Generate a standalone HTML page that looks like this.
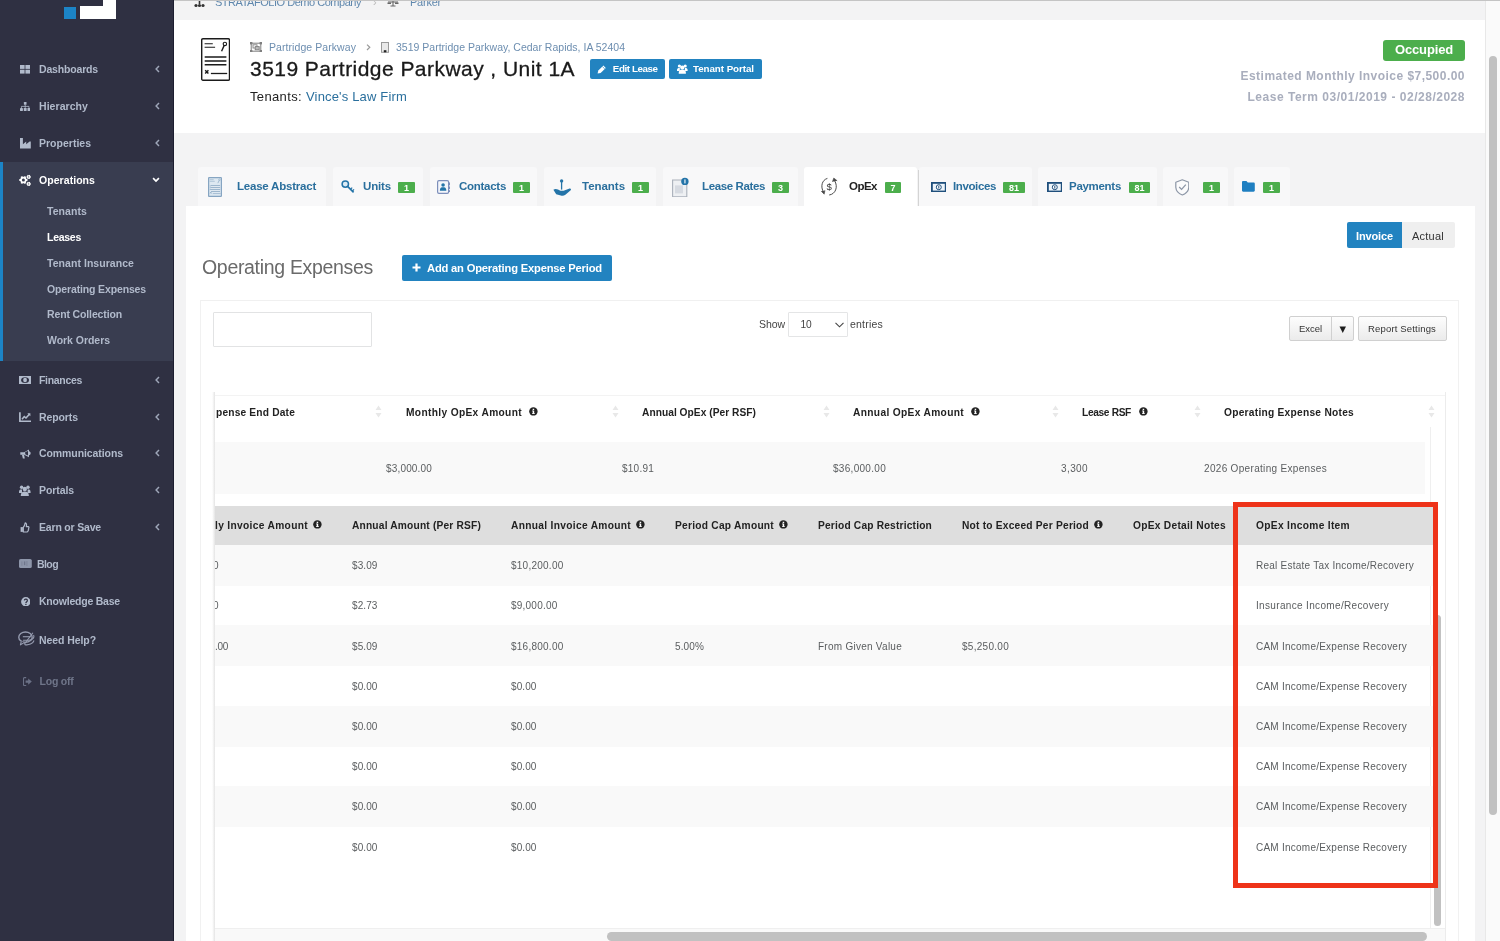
<!DOCTYPE html>
<html lang="en"><head><meta charset="utf-8"><title>3519 Partridge Parkway, Unit 1A - Operating Expenses</title>
<style>
html,body{margin:0;padding:0;}
body{width:1500px;height:941px;overflow:hidden;position:relative;background:#f3f3f4;font-family:'Liberation Sans',sans-serif;}
#page{position:absolute;left:0;top:0;width:1500px;height:941px;overflow:hidden;will-change:transform;}
#page nav,#page header,#page section,#page main,#page .bg{position:static;display:block;margin:0;padding:0;}
#page div,#page svg{position:absolute;box-sizing:border-box;}
#page div.bg{position:static;}
#page span{position:absolute;white-space:pre;line-height:20px;font-family:'Liberation Sans',sans-serif;}
</style></head><body><div id="page">
<div class="bg">
<div style="left:174px;top:0px;width:1326px;height:941px;background:#f3f3f4;"></div>
<div style="left:174px;top:20px;width:1311px;height:113px;background:#fff;"></div>
<div style="left:1485px;top:0px;width:15px;height:941px;background:#fafafa;border-left:1px solid #e8e8e8;"></div>
<div style="left:1489px;top:56px;width:8px;height:759px;background:#c1c1c1;border-radius:4px;"></div>
<div style="left:174px;top:0px;width:1326px;height:1px;background:#c4c4c4;z-index:2;"></div>
</div>
<nav class="sidebar" aria-label="Main navigation">
<div style="left:0px;top:0px;width:174px;height:941px;background:#2f3042;"></div>
<div style="left:0px;top:162px;width:174px;height:199px;background:#393d50;border-left:3.6px solid #1c84c6;"></div>
<div style="left:172.6px;top:0px;width:1.4px;height:941px;background:#1c1d2f;"></div>
<div style="left:64px;top:6.6px;width:11.6px;height:12.4px;background:#1c84c6;"></div>
<div style="left:80px;top:5.6px;width:35.6px;height:13.4px;background:#fff;"></div>
<div style="left:103px;top:0px;width:12.6px;height:8px;background:#fff;"></div>
<svg style="left:153.6px;top:64px" width="8" height="10" viewBox="0 0 8 10"><path d="M5 1.9 L2.1 5 L5 8.1" fill="none" stroke="#9ea6b8" stroke-width="1.45"/></svg>
<svg style="left:153.6px;top:101px" width="8" height="10" viewBox="0 0 8 10"><path d="M5 1.9 L2.1 5 L5 8.1" fill="none" stroke="#9ea6b8" stroke-width="1.45"/></svg>
<svg style="left:153.6px;top:138px" width="8" height="10" viewBox="0 0 8 10"><path d="M5 1.9 L2.1 5 L5 8.1" fill="none" stroke="#9ea6b8" stroke-width="1.45"/></svg>
<svg style="left:150.6px;top:176px" width="10" height="8" viewBox="0 0 10 8"><path d="M2.1 2.2 L5 5 L7.9 2.2" fill="none" stroke="#fff" stroke-width="1.7"/></svg>
<svg style="left:153.6px;top:375px" width="8" height="10" viewBox="0 0 8 10"><path d="M5 1.9 L2.1 5 L5 8.1" fill="none" stroke="#9ea6b8" stroke-width="1.45"/></svg>
<svg style="left:153.6px;top:412px" width="8" height="10" viewBox="0 0 8 10"><path d="M5 1.9 L2.1 5 L5 8.1" fill="none" stroke="#9ea6b8" stroke-width="1.45"/></svg>
<svg style="left:153.6px;top:448px" width="8" height="10" viewBox="0 0 8 10"><path d="M5 1.9 L2.1 5 L5 8.1" fill="none" stroke="#9ea6b8" stroke-width="1.45"/></svg>
<svg style="left:153.6px;top:485px" width="8" height="10" viewBox="0 0 8 10"><path d="M5 1.9 L2.1 5 L5 8.1" fill="none" stroke="#9ea6b8" stroke-width="1.45"/></svg>
<svg style="left:153.6px;top:522px" width="8" height="10" viewBox="0 0 8 10"><path d="M5 1.9 L2.1 5 L5 8.1" fill="none" stroke="#9ea6b8" stroke-width="1.45"/></svg>
<svg style="left:20.2px;top:65.2px" width="10" height="8.6" viewBox="0 0 10 8.6"><rect x="0" y="0" width="4.6" height="3.9" fill="#b1bacb"/><rect x="5.4" y="0" width="4.6" height="3.9" fill="#b1bacb"/><rect x="0" y="4.7" width="4.6" height="3.9" fill="#b1bacb"/><rect x="5.4" y="4.7" width="4.6" height="3.9" fill="#b1bacb"/></svg>
<svg style="left:20px;top:102px" width="10.4" height="9" viewBox="0 0 10.4 9"><rect x="3.9" y="0" width="2.6" height="2.8" rx=".4" fill="#b1bacb"/><rect x="0" y="6" width="2.9" height="3" rx=".4" fill="#b1bacb"/><rect x="3.75" y="6" width="2.9" height="3" rx=".4" fill="#b1bacb"/><rect x="7.5" y="6" width="2.9" height="3" rx=".4" fill="#b1bacb"/><path d="M5.2 2.8V6M1.45 6V4.4H8.95V6" fill="none" stroke="#b1bacb" stroke-width=".8"/></svg>
<svg style="left:19.8px;top:138.2px" width="10.8" height="10.6" viewBox="0 0 10.8 10.6"><path d="M0 0H2.9V6.2L6.2 3.4V6.2L9.6 3.4H10.8V10.6H0Z" fill="#b1bacb"/></svg>
<svg style="left:18px;top:174px" width="14" height="12" viewBox="0 0 14 12"><polygon points="9.48,5.02 9.48,6.98 8.54,6.93 7.78,8.26 8.29,9.05 6.59,10.03 6.16,9.19 4.64,9.19 4.21,10.03 2.51,9.05 3.02,8.26 2.26,6.93 1.32,6.98 1.32,5.02 2.26,5.07 3.02,3.74 2.51,2.95 4.21,1.97 4.64,2.81 6.16,2.81 6.59,1.97 8.29,2.95 7.78,3.74 8.54,5.07" fill="#fff"/><circle cx="5.4" cy="6" r="1.5" fill="#393d50"/><polygon points="12.94,2.36 12.94,3.44 12.42,3.41 12.00,4.13 12.28,4.57 11.35,5.11 11.12,4.64 10.28,4.64 10.05,5.11 9.12,4.57 9.40,4.13 8.98,3.41 8.46,3.44 8.46,2.36 8.98,2.39 9.40,1.67 9.12,1.23 10.05,0.69 10.28,1.16 11.12,1.16 11.35,0.69 12.28,1.23 12.00,1.67 12.42,2.39" fill="#fff"/><circle cx="10.7" cy="2.9" r="0.55" fill="#393d50"/><polygon points="12.94,9.36 12.94,10.44 12.42,10.41 12.00,11.13 12.28,11.57 11.35,12.11 11.12,11.64 10.28,11.64 10.05,12.11 9.12,11.57 9.40,11.13 8.98,10.41 8.46,10.44 8.46,9.36 8.98,9.39 9.40,8.67 9.12,8.23 10.05,7.69 10.28,8.16 11.12,8.16 11.35,7.69 12.28,8.23 12.00,8.67 12.42,9.39" fill="#fff"/><circle cx="10.7" cy="9.9" r="0.55" fill="#393d50"/></svg>
<svg style="left:19.1px;top:376px" width="12.1" height="8.1" viewBox="0 0 12.1 8.1"><rect x="0" y="0" width="12.1" height="8.1" fill="#b1bacb"/><ellipse cx="6.05" cy="4.05" rx="4.0" ry="2.9" fill="#2f3042"/><ellipse cx="6.05" cy="4.05" rx="1.9" ry="2.3" fill="#b1bacb"/></svg>
<svg style="left:18.9px;top:412px" width="12.2" height="10.2" viewBox="0 0 12.2 10.2"><path d="M0.9 0.3V9.3H12.2" fill="none" stroke="#b1bacb" stroke-width="1.7"/><path d="M3 7.2L5.3 4.6L7 6L10.4 2.2" fill="none" stroke="#b1bacb" stroke-width="1.6"/><path d="M8.3 1.2H11.4V4.3Z" fill="#b1bacb"/></svg>
<svg style="left:19.6px;top:449px" width="11.4" height="10" viewBox="0 0 11.4 10"><path d="M0.3 3.2H4.2L9 0.4V8.2L4.2 5.8H0.3Z" fill="#b1bacb"/><path d="M1.9 5.8H4.1L4.8 9.6H2.9Z" fill="#b1bacb"/><path d="M9 2.2C11.2 2.4 11.2 6 9 6.2Z" fill="#b1bacb"/><path d="M5.2 3.1L8 1.9V6.4L5.2 5.3Z" fill="#2f3042"/></svg>
<svg style="left:19.4px;top:485.2px" width="11.6" height="11.2" viewBox="0 0 11.6 11.2"><circle cx="2.6" cy="2.3" r="1.7" fill="#b1bacb"/><circle cx="9" cy="2.3" r="1.7" fill="#b1bacb"/><circle cx="5.8" cy="4" r="2.2" fill="#b1bacb"/><path d="M0 7.2C0 4.6 1.5 4.4 3 4.6V8H0Z" fill="#b1bacb"/><path d="M11.6 7.2C11.6 4.6 10.1 4.4 8.6 4.6V8H11.6Z" fill="#b1bacb"/><path d="M1.8 11.2C1.6 7.6 3 6.4 5.8 6.4C8.6 6.4 10 7.6 9.8 11.2Z" fill="#b1bacb"/></svg>
<svg style="left:20.4px;top:522.2px" width="9.4" height="10.6" viewBox="0 0 9.4 10.6"><path d="M0.6 5.1H2.9V9.9H0.6Z" fill="#b1bacb"/><path d="M3.3 5.3C4.6 3.8 5 2.4 5.2 0.8C6.6 1 6.8 2.8 6.3 4.6H8.4C9.2 4.8 9 6 8.6 6.3C9 6.9 8.7 7.6 8.3 7.8C8.5 8.5 8.2 9 7.8 9.2C7.8 9.8 7.4 10 6.8 10H3.3Z" fill="none" stroke="#b1bacb" stroke-width="1.2" stroke-linejoin="round"/></svg>
<svg style="left:18.9px;top:559.4px" width="12.8" height="9.2" viewBox="0 0 12.8 9.2"><rect x="0" y="0" width="12.8" height="9" rx="1.6" fill="#8e96aa"/><rect x="4.9" y="2.4" width="1.4" height="3.8" fill="#6f768b"/><rect x="7.4" y="2" width="1" height="5" fill="#7c8398"/><rect x="2.4" y="2.4" width="1" height="4.4" fill="#7c8398"/></svg>
<svg style="left:20.5px;top:596.8px" width="9.6" height="9.6" viewBox="0 0 9.6 9.6"><circle cx="4.8" cy="4.8" r="4.7" fill="#b1bacb"/><path d="M3.3 3.3C3.6 1.6 6.5 1.8 6.4 3.6C6.3 4.8 4.9 4.7 4.9 6.1" fill="none" stroke="#2f3042" stroke-width="1.2"/><rect x="4.25" y="6.8" width="1.3" height="1.2" fill="#2f3042"/></svg>
<svg style="left:18.4px;top:631px" width="17.6" height="17.6" viewBox="0 0 16 16"><ellipse cx="6.8" cy="5.6" rx="6.1" ry="4.7" fill="none" stroke="#969cb0" stroke-width="1.25"/><path d="M3 9.4L2.2 12.6L6 10.2" fill="#2f3042" stroke="#969cb0" stroke-width="1" stroke-linejoin="round"/><path d="M4.6 8.4H10C13.6 8 15.2 6 14.2 3.6" fill="none" stroke="#969cb0" stroke-width="1"/><path d="M13.6 1.6L5.6 12.2" fill="none" stroke="#969cb0" stroke-width="1"/><path d="M4.4 5.2H11.6" fill="none" stroke="#969cb0" stroke-width="1"/><path d="M6.2 12.4C9.6 13.2 13.6 11.6 14.6 8.6" fill="none" stroke="#969cb0" stroke-width="1"/></svg>
<svg style="left:23.2px;top:677px" width="9" height="9.2" viewBox="0 0 9 9.2"><path d="M3.2 0.6H1.4C0.8 0.6 0.5 1 0.5 1.6V7.6C0.5 8.2 0.8 8.6 1.4 8.6H3.2" fill="none" stroke="#6b7186" stroke-width="1.1"/><path d="M2.6 3.4H5.2V1.4L8.8 4.6L5.2 7.8V5.8H2.6Z" fill="#6b7186"/></svg>
<span style="left:39px;top:59.00px;font-size:10.5px;font-weight:700;color:#b1bacb;letter-spacing:-0.169px;">Dashboards</span>
<span style="left:39px;top:96.00px;font-size:10.5px;font-weight:700;color:#b1bacb;letter-spacing:0.061px;">Hierarchy</span>
<span style="left:39px;top:133.00px;font-size:10.5px;font-weight:700;color:#b1bacb;letter-spacing:0.006px;">Properties</span>
<span style="left:39px;top:170.00px;font-size:10.5px;font-weight:700;color:#fff;letter-spacing:0.056px;">Operations</span>
<span style="left:39px;top:370.00px;font-size:10.5px;font-weight:700;color:#b1bacb;letter-spacing:-0.316px;">Finances</span>
<span style="left:39px;top:407.00px;font-size:10.5px;font-weight:700;color:#b1bacb;letter-spacing:-0.098px;">Reports</span>
<span style="left:39px;top:443.00px;font-size:10.5px;font-weight:700;color:#b1bacb;letter-spacing:-0.085px;">Communications</span>
<span style="left:39px;top:480.00px;font-size:10.5px;font-weight:700;color:#b1bacb;letter-spacing:-0.087px;">Portals</span>
<span style="left:39px;top:517.00px;font-size:10.5px;font-weight:700;color:#b1bacb;letter-spacing:-0.184px;">Earn or Save</span>
<span style="left:37px;top:554.00px;font-size:10.5px;font-weight:700;color:#b1bacb;letter-spacing:-0.582px;">Blog</span>
<span style="left:39px;top:591.00px;font-size:10.5px;font-weight:700;color:#b1bacb;letter-spacing:-0.217px;">Knowledge Base</span>
<span style="left:39px;top:630.00px;font-size:10.5px;font-weight:700;color:#b1bacb;letter-spacing:-0.077px;">Need Help?</span>
<span style="left:39.5px;top:671.00px;font-size:10.5px;font-weight:700;color:#6f7589;letter-spacing:-0.225px;">Log off</span>
<span style="left:47px;top:201.00px;font-size:10.5px;font-weight:700;color:#b1bacb;letter-spacing:0.074px;">Tenants</span>
<span style="left:47px;top:227.00px;font-size:10.5px;font-weight:700;color:#fff;letter-spacing:-0.271px;">Leases</span>
<span style="left:47px;top:253.00px;font-size:10.5px;font-weight:700;color:#b1bacb;letter-spacing:0.052px;">Tenant Insurance</span>
<span style="left:47px;top:279.00px;font-size:10.5px;font-weight:700;color:#b1bacb;letter-spacing:-0.141px;">Operating Expenses</span>
<span style="left:47px;top:304.00px;font-size:10.5px;font-weight:700;color:#b1bacb;letter-spacing:-0.134px;">Rent Collection</span>
<span style="left:47px;top:330.00px;font-size:10.5px;font-weight:700;color:#b1bacb;letter-spacing:-0.038px;">Work Orders</span>
</nav>
<header class="lease-header">
<div style="left:590px;top:59px;width:75px;height:20px;background:#2283c0;border-radius:2px;"></div>
<div style="left:669px;top:59px;width:93px;height:20px;background:#2283c0;border-radius:2px;"></div>
<div style="left:1383px;top:39.5px;width:82px;height:21.7px;background:#4cae4c;border-radius:3px;"></div>
<svg style="left:200.8px;top:37.8px" width="29.2" height="42.9" viewBox="0 0 29.2 42.9"><rect x="0.7" y="0.7" width="27.8" height="41.5" rx="1.20" fill="none" stroke="#1b1b1b" stroke-width="1.4"/><path d="M3.60 5.70H11.80M3.60 9.30H14.10" stroke="#1b1b1b" stroke-width="1.10"/><path d="M3.70 19.10H25.40M3.70 23.00H25.40M3.70 26.80H25.40" stroke="#1b1b1b" stroke-width="1.50"/><path d="M9.90 35.50H26.20" stroke="#1b1b1b" stroke-width="1.30"/><path d="M4.20 32.20L7.40 35.60M7.40 32.20L4.20 35.60" stroke="#1b1b1b" stroke-width="1.40"/><circle cx="23.90" cy="5.90" r="1.70" fill="none" stroke="#1b1b1b" stroke-width="1.10"/><path d="M23.20 7.40L20.60 13.20" stroke="#1b1b1b" stroke-width="1.40"/></svg>
<svg style="left:249.8px;top:42px" width="12" height="10.4" viewBox="0 0 12 10.4"><rect x="1.2" y="1.2" width="9.6" height="8" fill="none" stroke="#7f7f7f" stroke-width="1"/><rect x="0" y="0" width="2.4" height="2.4" fill="#7f7f7f"/><rect x="9.6" y="0" width="2.4" height="2.4" fill="#7f7f7f"/><rect x="0" y="8" width="2.4" height="2.4" fill="#7f7f7f"/><rect x="9.6" y="8" width="2.4" height="2.4" fill="#7f7f7f"/><rect x="3" y="2.8" width="4" height="3.2" fill="none" stroke="#7f7f7f" stroke-width=".9"/><rect x="5.2" y="4.6" width="4" height="3.2" fill="#bdbdbd" stroke="#7f7f7f" stroke-width=".9"/></svg>
<svg style="left:365.8px;top:44.4px" width="5" height="6.6" viewBox="0 0 5 6.6"><path d="M1 0.6L3.8 3.3L1 6" fill="none" stroke="#9a9a9a" stroke-width="1.2"/></svg>
<svg style="left:381px;top:41.8px" width="8" height="10.8" viewBox="0 0 8 10.8"><rect x=".5" y=".5" width="7" height="9.8" fill="#e9e9e9" stroke="#9a9a9a" stroke-width="1"/><rect x="2.8" y="8.2" width="2.6" height="2.1" fill="#222"/></svg>
<svg style="left:597.4px;top:65.2px" width="9.4" height="8.6" viewBox="0 0 9.4 8.6"><path d="M1.3 5.6L6.4 0.6L8.8 2.9L3.6 8L0.6 8.4Z" fill="#fff"/><path d="M5.4 1.6L7.8 3.9" stroke="#2283c0" stroke-width=".7"/></svg>
<svg style="left:677px;top:64px" width="10.6" height="9.8" viewBox="0 0 10.6 9.8"><circle cx="2.4" cy="2" r="1.6" fill="#fff"/><circle cx="8.2" cy="2" r="1.6" fill="#fff"/><circle cx="5.3" cy="3.5" r="2.1" fill="#fff"/><path d="M0 6.2C0 4 1.4 3.9 2.8 4V7H0Z" fill="#fff"/><path d="M10.6 6.2C10.6 4 9.2 3.9 7.8 4V7H10.6Z" fill="#fff"/><path d="M1.7 9.8C1.5 6.6 2.8 5.6 5.3 5.6C7.8 5.6 9.1 6.6 8.9 9.8Z" fill="#fff"/></svg>
<svg style="left:194px;top:1px" width="11" height="7" viewBox="0 0 11 7"><circle cx="2" cy="4.5" r="1.6" fill="#333"/><circle cx="5.5" cy="4.5" r="1.6" fill="#333"/><circle cx="9" cy="4.5" r="1.6" fill="#333"/><rect x="4.7" y="0" width="1.6" height="3" fill="#333"/></svg>
<svg style="left:387px;top:1px" width="12" height="6" viewBox="0 0 12 6"><path d="M1 1H11M6 0V5M3.5 5H8.5" stroke="#666" stroke-width="1.1" fill="none"/><path d="M0.5 2.2H4M8 2.2H11.5" stroke="#666" stroke-width="1.4"/></svg>
<span style="left:215px;top:-8.00px;font-size:11px;font-weight:400;color:#5f87ad;letter-spacing:-0.471px;">STRATAFOLIO Demo Company</span>
<span style="left:410px;top:-8.00px;font-size:11px;font-weight:400;color:#5f87ad;letter-spacing:-0.234px;">Parker</span>
<span style="left:373px;top:-8.00px;font-size:11px;font-weight:400;color:#bbb;">›</span>
<span style="left:269px;top:37.00px;font-size:10.5px;font-weight:400;color:#6d8eb0;letter-spacing:0.071px;">Partridge Parkway</span>
<span style="left:396px;top:37.00px;font-size:10.5px;font-weight:400;color:#6d8eb0;letter-spacing:0.008px;">3519 Partridge Parkway, Cedar Rapids, IA 52404</span>
<span style="left:250px;top:59.00px;font-size:21px;font-weight:400;color:#1a1a1a;letter-spacing:0.453px;-webkit-text-stroke:0.3px #1a1a1a;">3519 Partridge Parkway , Unit 1A</span>
<span style="left:250px;top:87.00px;font-size:13px;font-weight:400;color:#222;letter-spacing:0.355px;">Tenants:</span>
<span style="left:306px;top:87.00px;font-size:13px;font-weight:400;color:#2a6f9d;letter-spacing:0.167px;">Vince&#x27;s Law Firm</span>
<span style="left:612.8px;top:59.00px;font-size:9.8px;font-weight:700;color:#fff;letter-spacing:-0.422px;">Edit Lease</span>
<span style="left:693px;top:59.00px;font-size:9.8px;font-weight:700;color:#fff;letter-spacing:-0.067px;">Tenant Portal</span>
<span style="left:1395px;top:40.00px;font-size:13px;font-weight:700;color:#fff;letter-spacing:-0.156px;">Occupied</span>
<span style="left:1240.5px;top:65.90px;font-size:12px;font-weight:700;color:#a9aebd;letter-spacing:0.469px;">Estimated Monthly Invoice $7,500.00</span>
<span style="left:1247.5px;top:87.10px;font-size:12px;font-weight:700;color:#a9aebd;letter-spacing:0.517px;">Lease Term 03/01/2019 - 02/28/2028</span>
</header>
<section class="lease-tabs">
<div style="left:198px;top:167px;width:128px;height:40px;background:#f8f8f9;border-radius:3px 3px 0 0;"></div>
<div style="left:333px;top:167px;width:90px;height:40px;background:#f8f8f9;border-radius:3px 3px 0 0;"></div>
<div style="left:398px;top:181.5px;width:17px;height:11.8px;background:#4cae4c;border-radius:1px;"></div>
<div style="left:430px;top:167px;width:107px;height:40px;background:#f8f8f9;border-radius:3px 3px 0 0;"></div>
<div style="left:513px;top:181.5px;width:17px;height:11.8px;background:#4cae4c;border-radius:1px;"></div>
<div style="left:544px;top:167px;width:112px;height:40px;background:#f8f8f9;border-radius:3px 3px 0 0;"></div>
<div style="left:632px;top:181.5px;width:17px;height:11.8px;background:#4cae4c;border-radius:1px;"></div>
<div style="left:663px;top:167px;width:135px;height:40px;background:#f8f8f9;border-radius:3px 3px 0 0;"></div>
<div style="left:772px;top:181.5px;width:17px;height:11.8px;background:#4cae4c;border-radius:1px;"></div>
<div style="left:804px;top:167px;width:113px;height:40px;background:#fff;border-radius:3px 3px 0 0;"></div>
<div style="left:885px;top:181.5px;width:16px;height:11.8px;background:#4cae4c;border-radius:1px;"></div>
<div style="left:919px;top:167px;width:113px;height:40px;background:#f8f8f9;border-radius:3px 3px 0 0;"></div>
<div style="left:1003px;top:181.5px;width:22px;height:11.8px;background:#4cae4c;border-radius:1px;"></div>
<div style="left:1038px;top:167px;width:119px;height:40px;background:#f8f8f9;border-radius:3px 3px 0 0;"></div>
<div style="left:1129px;top:181.5px;width:21px;height:11.8px;background:#4cae4c;border-radius:1px;"></div>
<div style="left:1163px;top:167px;width:65px;height:40px;background:#f8f8f9;border-radius:3px 3px 0 0;"></div>
<div style="left:1203px;top:181.5px;width:17px;height:11.8px;background:#4cae4c;border-radius:1px;"></div>
<div style="left:1234px;top:167px;width:56px;height:40px;background:#f8f8f9;border-radius:3px 3px 0 0;"></div>
<div style="left:1263px;top:181.5px;width:17px;height:11.8px;background:#4cae4c;border-radius:1px;"></div>
<div style="left:917.6px;top:170px;width:1.2px;height:36px;background:#d4d4d4;"></div>
<svg style="left:208px;top:177.2px" width="14" height="20" viewBox="0 0 14 20"><rect x="0.6" y="0.6" width="12.8" height="18.8" rx="0.58" fill="#dde8f1" stroke="#86a5c2" stroke-width="1.2"/><path d="M1.73 2.66H5.66M1.73 4.34H6.76" stroke="#86a5c2" stroke-width="0.51"/><path d="M1.77 8.90H12.18M1.77 10.72H12.18M1.77 12.49H12.18" stroke="#86a5c2" stroke-width="0.70"/><path d="M4.75 16.55H12.56" stroke="#86a5c2" stroke-width="0.61"/><path d="M2.01 15.01L3.55 16.60M3.55 15.01L2.01 16.60" stroke="#86a5c2" stroke-width="0.65"/><circle cx="11.46" cy="2.75" r="0.82" fill="none" stroke="#86a5c2" stroke-width="0.53"/><path d="M11.12 3.45L9.88 6.15" stroke="#86a5c2" stroke-width="0.67"/></svg>
<div style="left:210.5px;top:185.2px;width:9px;height:6.4px;background:repeating-linear-gradient(#9db6cd 0,#9db6cd 1.1px,#dfe8f0 1.1px,#dfe8f0 2.1px);"></div>
<svg style="left:341px;top:180.4px" width="14" height="13.4" viewBox="0 0 14 13.4"><circle cx="4.3" cy="4.1" r="3.2" fill="#dcebf5" stroke="#2474a8" stroke-width="1.5"/><path d="M6.6 6.4L12.6 12.4" stroke="#2474a8" stroke-width="1.7"/><path d="M9.6 9.2L11.2 7.6M11.4 11L13 9.4" stroke="#2474a8" stroke-width="1.2"/></svg>
<svg style="left:437px;top:180px" width="13.4" height="14" viewBox="0 0 13.4 14"><rect x=".6" y=".6" width="11" height="12.8" rx="1.4" fill="#f4f6fb" stroke="#7d8fbb" stroke-width="1.2"/><path d="M12.4 2.6V5.2M12.4 6.4V9M12.4 10.2V12" stroke="#7d8fbb" stroke-width="1.2"/><circle cx="6.1" cy="5" r="1.8" fill="#2474a8"/><path d="M2.9 10.8C2.9 7.6 4.4 7.2 6.1 7.2C7.8 7.2 9.3 7.6 9.3 10.8Z" fill="#2474a8"/></svg>
<svg style="left:552.5px;top:179.4px" width="18.4" height="17" viewBox="0 0 18.4 17"><circle cx="8.6" cy="1.9" r="1.7" fill="#2474a8"/><path d="M8.6 3V10.6" stroke="#2474a8" stroke-width="1.3"/><path d="M0.4 10.8C1.8 9.6 3.6 9.8 5 10.6L7.4 11.8H10.6L16.6 9.6C18.2 9.4 18.4 10.8 17.4 11.6L12.4 15.8C11 16.8 9.6 17 7.8 16.6L3.2 15.2Z" fill="#2474a8"/></svg>
<svg style="left:671.5px;top:177px" width="18" height="20.4" viewBox="0 0 18 20.4"><path d="M0.6 3H14.8V19.8H0.6Z" fill="#eef0f3" stroke="#a9b0ba" stroke-width="1.1"/><rect x="3" y="8.4" width="8" height="8" fill="#d6dae1"/><circle cx="12.9" cy="4.4" r="3.7" fill="#2474a8"/><rect x="12.4" y="2.4" width="1.1" height="4" fill="#fff"/></svg>
<svg style="left:818.6px;top:177.4px" width="20.4" height="19.4" viewBox="0 0 20.4 19.4"><path d="M8.4 1.4C3 3 1.2 9.4 4.6 15.4" fill="none" stroke="#4a4a4a" stroke-width="1"/><path d="M2.2 14.2L5.2 17.2L6 13.4" fill="#4a4a4a" stroke="#4a4a4a" stroke-width=".6"/><path d="M10.2 18C16.4 17.2 19.4 10 15.6 3.6" fill="none" stroke="#4a4a4a" stroke-width="1"/><path d="M13.4 4.8L14.8 1L18.2 3.8" fill="#4a4a4a" stroke="#4a4a4a" stroke-width=".6"/></svg>
<svg style="left:930.8px;top:181.6px" width="15.6" height="10.4" viewBox="0 0 15.6 10.4"><rect x=".9" y=".9" width="13.8" height="8.6" fill="#eef5fb" stroke="#1f4f7c" stroke-width="1.8"/><circle cx="7.8" cy="5.2" r="2.5" fill="#fff" stroke="#1f4f7c" stroke-width="1"/><rect x="7.3" y="3.8" width="1" height="2.8" fill="#1f4f7c"/></svg>
<svg style="left:1046.6px;top:181.6px" width="15.6" height="10.4" viewBox="0 0 15.6 10.4"><rect x=".9" y=".9" width="13.8" height="8.6" fill="#eef5fb" stroke="#1f4f7c" stroke-width="1.8"/><circle cx="7.8" cy="5.2" r="2.5" fill="#fff" stroke="#1f4f7c" stroke-width="1"/><rect x="7.3" y="3.8" width="1" height="2.8" fill="#1f4f7c"/></svg>
<svg style="left:1174.6px;top:178.8px" width="14.6" height="16.8" viewBox="0 0 14.6 16.8"><path d="M7.3 0.8L13.8 3.2V8.2C13.6 11.8 10.8 14.6 7.3 16C3.8 14.6 1 11.8 0.8 8.2V3.2Z" fill="#fbfbfc" stroke="#8c96a6" stroke-width="1.2" stroke-linejoin="round"/><path d="M4.2 8L6.6 10.4L10.8 5.6" fill="none" stroke="#8c96a6" stroke-width="1.3"/></svg>
<svg style="left:1242px;top:181px" width="12.8" height="10.8" viewBox="0 0 12.8 10.8"><path d="M0 1.2C0 .5 .5 0 1.2 0H4.4L5.8 1.6H11.6C12.3 1.6 12.8 2.1 12.8 2.8V9.6C12.8 10.3 12.3 10.8 11.6 10.8H1.2C.5 10.8 0 10.3 0 9.6Z" fill="#1f7fc1"/></svg>
<span style="left:237px;top:176.00px;font-size:11.5px;font-weight:700;color:#2a6f9d;letter-spacing:-0.217px;">Lease Abstract</span>
<span style="left:363px;top:176.00px;font-size:11.5px;font-weight:700;color:#2a6f9d;letter-spacing:-0.150px;">Units</span>
<span style="left:404.0px;top:177.50px;font-size:9px;font-weight:700;color:#fff;">1</span>
<span style="left:459px;top:176.00px;font-size:11.5px;font-weight:700;color:#2a6f9d;letter-spacing:-0.275px;">Contacts</span>
<span style="left:519.0px;top:177.50px;font-size:9px;font-weight:700;color:#fff;">1</span>
<span style="left:582px;top:176.00px;font-size:11.5px;font-weight:700;color:#2a6f9d;letter-spacing:-0.036px;">Tenants</span>
<span style="left:638.0px;top:177.50px;font-size:9px;font-weight:700;color:#fff;">1</span>
<span style="left:702px;top:176.00px;font-size:11.5px;font-weight:700;color:#2a6f9d;letter-spacing:-0.375px;">Lease Rates</span>
<span style="left:778.0px;top:177.50px;font-size:9px;font-weight:700;color:#fff;">3</span>
<span style="left:849px;top:176.00px;font-size:11.5px;font-weight:700;color:#222;letter-spacing:-0.512px;">OpEx</span>
<span style="left:890.5px;top:177.50px;font-size:9px;font-weight:700;color:#fff;">7</span>
<span style="left:953px;top:176.00px;font-size:11.5px;font-weight:700;color:#2a6f9d;letter-spacing:-0.379px;">Invoices</span>
<span style="left:1009.0px;top:177.50px;font-size:9px;font-weight:700;color:#fff;">81</span>
<span style="left:1069px;top:176.00px;font-size:11.5px;font-weight:700;color:#2a6f9d;letter-spacing:-0.293px;">Payments</span>
<span style="left:1134.5px;top:177.50px;font-size:9px;font-weight:700;color:#fff;">81</span>
<span style="left:1209.0px;top:177.50px;font-size:9px;font-weight:700;color:#fff;">1</span>
<span style="left:1269.0px;top:177.50px;font-size:9px;font-weight:700;color:#fff;">1</span>
<span style="left:826.6px;top:176.60px;font-size:9.5px;font-weight:400;color:#333;">$</span>
</section>
<main class="opex-panel">
<div style="left:185.5px;top:206px;width:1289px;height:735px;background:#fff;"></div>
<div style="left:1346.6px;top:222.3px;width:55.8px;height:25.8px;background:#2283c0;border-radius:2px 0 0 2px;"></div>
<div style="left:1402.4px;top:222.3px;width:52.2px;height:25.8px;background:#efefef;border-radius:0 2px 2px 0;"></div>
<div style="left:402px;top:255px;width:210px;height:26px;background:#2283c0;border-radius:2px;"></div>
<svg style="left:412px;top:263px" width="9" height="9" viewBox="0 0 9 9"><path d="M4.5 0.5V8.5M0.5 4.5H8.5" stroke="#fff" stroke-width="2.2"/></svg>
<div style="left:200px;top:299.5px;width:1259px;height:642px;background:#fff;border-top:1px solid #f0f0f0;border-left:1px solid #f1f1f1;border-right:1px solid #f1f1f1;"></div>
<div style="left:213px;top:312px;width:159px;height:35px;background:#fff;border:1px solid #e2e3e4;border-radius:1px;"></div>
<div style="left:788px;top:312px;width:60px;height:25px;background:#fff;border:1px solid #e4e5e6;border-radius:1px;"></div>
<svg style="left:834px;top:321px" width="11" height="8" viewBox="0 0 11 8"><path d="M1.5 1.8 L5.5 5.8 L9.5 1.8" fill="none" stroke="#444" stroke-width="1.1"/></svg>
<div style="left:1289px;top:316px;width:43px;height:25px;background:linear-gradient(#fdfdfd,#ebebeb);border:1px solid #d0d0d0;border-radius:2px 0 0 2px;"></div>
<div style="left:1331px;top:316px;width:23px;height:25px;background:linear-gradient(#fdfdfd,#ebebeb);border:1px solid #d0d0d0;border-radius:0 2px 2px 0;"></div>
<div style="left:1358px;top:316px;width:89px;height:25px;background:linear-gradient(#fdfdfd,#ebebeb);border:1px solid #d0d0d0;border-radius:2px;"></div>
<span style="left:1356px;top:225.50px;font-size:11px;font-weight:700;color:#fff;letter-spacing:-0.129px;">Invoice</span>
<span style="left:1412px;top:225.50px;font-size:11px;font-weight:400;color:#333;letter-spacing:0.237px;">Actual</span>
<span style="left:202px;top:256.50px;font-size:19.5px;font-weight:400;color:#6a6a6a;letter-spacing:-0.317px;">Operating Expenses</span>
<span style="left:427px;top:257.50px;font-size:11.2px;font-weight:700;color:#fff;letter-spacing:-0.191px;">Add an Operating Expense Period</span>
<span style="left:759px;top:314.00px;font-size:10.5px;font-weight:400;color:#444;letter-spacing:-0.066px;">Show</span>
<span style="left:800.5px;top:314.50px;font-size:10.2px;font-weight:400;color:#444;letter-spacing:-0.172px;">10</span>
<span style="left:850px;top:314.00px;font-size:10.5px;font-weight:400;color:#444;letter-spacing:0.212px;">entries</span>
<span style="left:1299px;top:319.00px;font-size:9.5px;font-weight:400;color:#333;letter-spacing:-0.047px;">Excel</span>
<span style="left:1339.5px;top:318.90px;font-size:8.5px;font-weight:400;color:#1c1c1c;font-family:'DejaVu Sans',sans-serif;">▼</span>
<span style="left:1368px;top:319.00px;font-size:9.5px;font-weight:400;color:#333;letter-spacing:0.168px;">Report Settings</span>
</main>
<section class="opex-table">
<div style="left:214px;top:395px;width:1232px;height:1px;background:#f3f3f3;"></div>
<div style="left:213px;top:442px;width:1212px;height:52px;background:#f9f9f9;"></div>
<div style="left:1430px;top:427px;width:1px;height:514px;background:#efefef;"></div>
<div style="left:1444.6px;top:392px;width:1.6px;height:549px;background:#ececec;"></div>
<svg style="left:375.4px;top:405px" width="7" height="13" viewBox="0 0 7 13"><path d="M3.5 0.5 L6.5 5 H0.5Z M3.5 12.5 L6.5 8 H0.5Z" fill="#e8e8e8"/></svg>
<svg style="left:612.4px;top:405px" width="7" height="13" viewBox="0 0 7 13"><path d="M3.5 0.5 L6.5 5 H0.5Z M3.5 12.5 L6.5 8 H0.5Z" fill="#e8e8e8"/></svg>
<svg style="left:823.4px;top:405px" width="7" height="13" viewBox="0 0 7 13"><path d="M3.5 0.5 L6.5 5 H0.5Z M3.5 12.5 L6.5 8 H0.5Z" fill="#e8e8e8"/></svg>
<svg style="left:1052.4px;top:405px" width="7" height="13" viewBox="0 0 7 13"><path d="M3.5 0.5 L6.5 5 H0.5Z M3.5 12.5 L6.5 8 H0.5Z" fill="#e8e8e8"/></svg>
<svg style="left:1194.4px;top:405px" width="7" height="13" viewBox="0 0 7 13"><path d="M3.5 0.5 L6.5 5 H0.5Z M3.5 12.5 L6.5 8 H0.5Z" fill="#e8e8e8"/></svg>
<svg style="left:1428.4px;top:405px" width="7" height="13" viewBox="0 0 7 13"><path d="M3.5 0.5 L6.5 5 H0.5Z M3.5 12.5 L6.5 8 H0.5Z" fill="#e8e8e8"/></svg>
<svg style="left:528.9px;top:407.3px" width="8.8" height="8.8" viewBox="0 0 10 10"><circle cx="5" cy="5" r="4.8" fill="#222"/><rect x="4.2" y="4.1" width="1.7" height="3.6" fill="#fff"/><rect x="4.2" y="2" width="1.7" height="1.4" fill="#fff"/><rect x="3.5" y="7" width="3.1" height="0.9" fill="#fff"/><rect x="3.5" y="4.1" width="1.5" height="0.8" fill="#fff"/></svg>
<svg style="left:970.9px;top:407.3px" width="8.8" height="8.8" viewBox="0 0 10 10"><circle cx="5" cy="5" r="4.8" fill="#222"/><rect x="4.2" y="4.1" width="1.7" height="3.6" fill="#fff"/><rect x="4.2" y="2" width="1.7" height="1.4" fill="#fff"/><rect x="3.5" y="7" width="3.1" height="0.9" fill="#fff"/><rect x="3.5" y="4.1" width="1.5" height="0.8" fill="#fff"/></svg>
<svg style="left:1138.9px;top:407.3px" width="8.8" height="8.8" viewBox="0 0 10 10"><circle cx="5" cy="5" r="4.8" fill="#222"/><rect x="4.2" y="4.1" width="1.7" height="3.6" fill="#fff"/><rect x="4.2" y="2" width="1.7" height="1.4" fill="#fff"/><rect x="3.5" y="7" width="3.1" height="0.9" fill="#fff"/><rect x="3.5" y="4.1" width="1.5" height="0.8" fill="#fff"/></svg>
<span style="left:216px;top:402.60px;font-size:10.2px;font-weight:700;color:#222;letter-spacing:0.183px;">pense End Date</span>
<span style="left:406px;top:402.60px;font-size:10.2px;font-weight:700;color:#222;letter-spacing:0.346px;">Monthly OpEx Amount</span>
<span style="left:642px;top:402.60px;font-size:10.2px;font-weight:700;color:#222;letter-spacing:0.037px;">Annual OpEx (Per RSF)</span>
<span style="left:853px;top:402.60px;font-size:10.2px;font-weight:700;color:#222;letter-spacing:0.339px;">Annual OpEx Amount</span>
<span style="left:1082px;top:402.60px;font-size:10.2px;font-weight:700;color:#222;letter-spacing:-0.344px;">Lease RSF</span>
<span style="left:1224px;top:402.60px;font-size:10.2px;font-weight:700;color:#222;letter-spacing:0.262px;">Operating Expense Notes</span>
<span style="left:386px;top:458.70px;font-size:10px;font-weight:400;color:#5a5d5f;letter-spacing:0.167px;">$3,000.00</span>
<span style="left:622px;top:458.70px;font-size:10px;font-weight:400;color:#5a5d5f;letter-spacing:0.234px;">$10.91</span>
<span style="left:833px;top:458.70px;font-size:10px;font-weight:400;color:#5a5d5f;letter-spacing:0.294px;">$36,000.00</span>
<span style="left:1061px;top:458.70px;font-size:10px;font-weight:400;color:#5a5d5f;letter-spacing:0.394px;">3,300</span>
<span style="left:1204px;top:458.70px;font-size:10px;font-weight:400;color:#5a5d5f;letter-spacing:0.320px;">2026 Operating Expenses</span>
</section>
<section class="opex-detail-table">
<div style="left:214px;top:506px;width:1220px;height:40px;background:#dedede;"></div>
<div style="left:214px;top:544.8px;width:1220px;height:41.2px;background:#f9f9f9;"></div>
<div style="left:214px;top:625.1999999999999px;width:1220px;height:41.2px;background:#f9f9f9;"></div>
<div style="left:214px;top:705.5999999999999px;width:1220px;height:41.2px;background:#f9f9f9;"></div>
<div style="left:214px;top:786.0px;width:1220px;height:41.2px;background:#f9f9f9;"></div>
<svg style="left:312.9px;top:520.3px" width="8.8" height="8.8" viewBox="0 0 10 10"><circle cx="5" cy="5" r="4.8" fill="#222"/><rect x="4.2" y="4.1" width="1.7" height="3.6" fill="#fff"/><rect x="4.2" y="2" width="1.7" height="1.4" fill="#fff"/><rect x="3.5" y="7" width="3.1" height="0.9" fill="#fff"/><rect x="3.5" y="4.1" width="1.5" height="0.8" fill="#fff"/></svg>
<svg style="left:635.9px;top:520.3px" width="8.8" height="8.8" viewBox="0 0 10 10"><circle cx="5" cy="5" r="4.8" fill="#222"/><rect x="4.2" y="4.1" width="1.7" height="3.6" fill="#fff"/><rect x="4.2" y="2" width="1.7" height="1.4" fill="#fff"/><rect x="3.5" y="7" width="3.1" height="0.9" fill="#fff"/><rect x="3.5" y="4.1" width="1.5" height="0.8" fill="#fff"/></svg>
<svg style="left:778.9px;top:520.3px" width="8.8" height="8.8" viewBox="0 0 10 10"><circle cx="5" cy="5" r="4.8" fill="#222"/><rect x="4.2" y="4.1" width="1.7" height="3.6" fill="#fff"/><rect x="4.2" y="2" width="1.7" height="1.4" fill="#fff"/><rect x="3.5" y="7" width="3.1" height="0.9" fill="#fff"/><rect x="3.5" y="4.1" width="1.5" height="0.8" fill="#fff"/></svg>
<svg style="left:1093.9px;top:520.3px" width="8.8" height="8.8" viewBox="0 0 10 10"><circle cx="5" cy="5" r="4.8" fill="#222"/><rect x="4.2" y="4.1" width="1.7" height="3.6" fill="#fff"/><rect x="4.2" y="2" width="1.7" height="1.4" fill="#fff"/><rect x="3.5" y="7" width="3.1" height="0.9" fill="#fff"/><rect x="3.5" y="4.1" width="1.5" height="0.8" fill="#fff"/></svg>
<div style="left:201.5px;top:392px;width:13px;height:549px;background:linear-gradient(90deg,#fff 0,#fff 78%,#e4e4e4 100%);z-index:3;"></div>
<div style="left:214px;top:928px;width:1230.6px;height:13px;background:#f9f9f9;border-top:1px solid #efefef;"></div>
<div style="left:607px;top:932px;width:820px;height:9px;background:#c1c1c1;border-radius:5px;"></div>
<div style="left:1434px;top:615px;width:7px;height:311px;background:#c1c1c1;border-radius:4px;z-index:5;"></div>
<div style="left:1233px;top:501.5px;width:204.5px;height:386px;border:5px solid #ee3319;z-index:6;"></div>
<span style="left:215px;top:515.60px;font-size:10.2px;font-weight:700;color:#222;letter-spacing:0.332px;">ly Invoice Amount</span>
<span style="left:352px;top:515.60px;font-size:10.2px;font-weight:700;color:#222;letter-spacing:0.187px;">Annual Amount (Per RSF)</span>
<span style="left:511px;top:515.60px;font-size:10.2px;font-weight:700;color:#222;letter-spacing:0.315px;">Annual Invoice Amount</span>
<span style="left:675px;top:515.60px;font-size:10.2px;font-weight:700;color:#222;letter-spacing:0.252px;">Period Cap Amount</span>
<span style="left:818px;top:515.60px;font-size:10.2px;font-weight:700;color:#222;letter-spacing:0.190px;">Period Cap Restriction</span>
<span style="left:962px;top:515.60px;font-size:10.2px;font-weight:700;color:#222;letter-spacing:0.220px;">Not to Exceed Per Period</span>
<span style="left:1133px;top:515.60px;font-size:10.2px;font-weight:700;color:#222;letter-spacing:0.275px;">OpEx Detail Notes</span>
<span style="left:1256px;top:515.60px;font-size:10.2px;font-weight:700;color:#222;letter-spacing:0.319px;">OpEx Income Item</span>
<span style="left:352px;top:556.20px;font-size:10px;font-weight:400;color:#5a5d5f;letter-spacing:0.094px;">$3.09</span>
<span style="left:511px;top:556.20px;font-size:10px;font-weight:400;color:#5a5d5f;letter-spacing:0.244px;">$10,200.00</span>
<span style="left:1256px;top:556.20px;font-size:10px;font-weight:400;color:#5a5d5f;letter-spacing:0.243px;">Real Estate Tax Income/Recovery</span>
<span style="left:352px;top:596.40px;font-size:10px;font-weight:400;color:#5a5d5f;letter-spacing:0.094px;">$2.73</span>
<span style="left:511px;top:596.40px;font-size:10px;font-weight:400;color:#5a5d5f;letter-spacing:0.222px;">$9,000.00</span>
<span style="left:1256px;top:596.40px;font-size:10px;font-weight:400;color:#5a5d5f;letter-spacing:0.339px;">Insurance Income/Recovery</span>
<span style="left:352px;top:636.60px;font-size:10px;font-weight:400;color:#5a5d5f;letter-spacing:0.094px;">$5.09</span>
<span style="left:511px;top:636.60px;font-size:10px;font-weight:400;color:#5a5d5f;letter-spacing:0.244px;">$16,800.00</span>
<span style="left:1256px;top:636.60px;font-size:10px;font-weight:400;color:#5a5d5f;letter-spacing:0.240px;">CAM Income/Expense Recovery</span>
<span style="left:352px;top:676.80px;font-size:10px;font-weight:400;color:#5a5d5f;letter-spacing:0.094px;">$0.00</span>
<span style="left:511px;top:676.80px;font-size:10px;font-weight:400;color:#5a5d5f;letter-spacing:0.094px;">$0.00</span>
<span style="left:1256px;top:676.80px;font-size:10px;font-weight:400;color:#5a5d5f;letter-spacing:0.240px;">CAM Income/Expense Recovery</span>
<span style="left:352px;top:717.00px;font-size:10px;font-weight:400;color:#5a5d5f;letter-spacing:0.094px;">$0.00</span>
<span style="left:511px;top:717.00px;font-size:10px;font-weight:400;color:#5a5d5f;letter-spacing:0.094px;">$0.00</span>
<span style="left:1256px;top:717.00px;font-size:10px;font-weight:400;color:#5a5d5f;letter-spacing:0.240px;">CAM Income/Expense Recovery</span>
<span style="left:352px;top:757.20px;font-size:10px;font-weight:400;color:#5a5d5f;letter-spacing:0.094px;">$0.00</span>
<span style="left:511px;top:757.20px;font-size:10px;font-weight:400;color:#5a5d5f;letter-spacing:0.094px;">$0.00</span>
<span style="left:1256px;top:757.20px;font-size:10px;font-weight:400;color:#5a5d5f;letter-spacing:0.240px;">CAM Income/Expense Recovery</span>
<span style="left:352px;top:797.40px;font-size:10px;font-weight:400;color:#5a5d5f;letter-spacing:0.094px;">$0.00</span>
<span style="left:511px;top:797.40px;font-size:10px;font-weight:400;color:#5a5d5f;letter-spacing:0.094px;">$0.00</span>
<span style="left:1256px;top:797.40px;font-size:10px;font-weight:400;color:#5a5d5f;letter-spacing:0.240px;">CAM Income/Expense Recovery</span>
<span style="left:352px;top:837.60px;font-size:10px;font-weight:400;color:#5a5d5f;letter-spacing:0.094px;">$0.00</span>
<span style="left:511px;top:837.60px;font-size:10px;font-weight:400;color:#5a5d5f;letter-spacing:0.094px;">$0.00</span>
<span style="left:1256px;top:837.60px;font-size:10px;font-weight:400;color:#5a5d5f;letter-spacing:0.240px;">CAM Income/Expense Recovery</span>
<span style="left:213px;top:556.20px;font-size:10px;font-weight:400;color:#5a5d5f;letter-spacing:0.438px;">0</span>
<span style="left:213px;top:596.40px;font-size:10px;font-weight:400;color:#5a5d5f;letter-spacing:0.438px;">0</span>
<span style="left:215px;top:636.60px;font-size:10px;font-weight:400;color:#5a5d5f;letter-spacing:-0.302px;">.00</span>
<span style="left:675px;top:636.60px;font-size:10px;font-weight:400;color:#5a5d5f;letter-spacing:0.128px;">5.00%</span>
<span style="left:818px;top:636.60px;font-size:10px;font-weight:400;color:#5a5d5f;letter-spacing:0.260px;">From Given Value</span>
<span style="left:962px;top:636.60px;font-size:10px;font-weight:400;color:#5a5d5f;letter-spacing:0.278px;">$5,250.00</span>
</section>
</div></body></html>
